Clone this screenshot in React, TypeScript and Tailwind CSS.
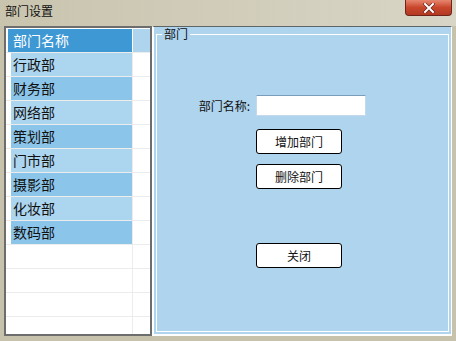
import React from 'react';

const depts = ['行政部', '财务部', '网络部', '策划部', '门市部', '摄影部', '化妆部', '数码部'];

const font = { fontFamily: '"Noto Sans CJK SC", "Noto Sans", sans-serif' };

const App = () => {
  return (
    <div className="w-[456px] h-[341px] bg-[#c6c2ab] flex flex-col overflow-hidden" style={font}>
      {/* Title bar */}
      <div className="relative h-[26px] shrink-0 bg-gradient-to-r from-[#c9c4ae] to-[#d9d5c6]">
        <span className="absolute left-[5px] top-[3px] text-[12px] leading-[16px] text-[#111]">部门设置</span>
        <button className="absolute right-[4px] top-0 w-[47px] h-[16px] rounded-b-[4px] border border-t-0 border-[#6e2418] bg-gradient-to-b from-[#e7866f] via-[#c8462c] to-[#b23a22] flex items-center justify-center">
          <svg width="12" height="10" viewBox="0 0 12 10">
            <path d="M2 1 L10 9 M10 1 L2 9" stroke="#5a2015" strokeWidth="3.2" strokeLinecap="square" />
            <path d="M2 1 L10 9 M10 1 L2 9" stroke="#ffffff" strokeWidth="2" strokeLinecap="square" />
          </svg>
        </button>
      </div>

      {/* Body */}
      <div className="flex h-[310px] pl-[4px] pr-[4px]">
        {/* Grid */}
        <div className="w-[148px] h-full border-2 border-[#6d6d6d] bg-white flex flex-col overflow-hidden">
          <div className="flex h-[24px] pt-[1px] shrink-0">
            <div className="ml-[2px] w-[124px] h-[23px] bg-[#3d98d3] text-white text-[14px] leading-[23px] pl-[5px]">部门名称</div>
            <div className="ml-[1px] w-[17px] h-[23px] bg-[#aed4ee]"></div>
          </div>
          {depts.map((d, i) => (
            <div key={d} className="flex h-[24px] shrink-0 border-t border-[#ececec]">
              <div className={`ml-[5px] w-[121px] h-[23px] text-[14px] leading-[23px] pl-[2px] text-[#111] ${i % 2 === 0 ? 'bg-[#acd5ef]' : 'bg-[#8cc5ea]'}`}>
                {d}
              </div>
              <div className="w-[1px] bg-[#ececec]"></div>
            </div>
          ))}
          {[0, 1, 2, 3].map((i) => (
            <div key={i} className="flex h-[24px] shrink-0 border-t border-[#ececec]">
              <div className="w-[126px]"></div>
              <div className="w-[1px] bg-[#ececec]"></div>
            </div>
          ))}
        </div>

        {/* Right panel */}
        <div className="w-[300px] h-full bg-[#aed4ee] border-t border-[#5f6565] border-l-2 border-l-white border-r border-r-white border-b-2 border-b-white pl-[2px] pr-[2px] pb-[1px]">
          <fieldset className="h-[306px] border border-white -mt-[1px] pb-0">
            <legend className="ml-[5px] px-[2px] text-[12px] leading-[16px] text-[#111]">部门</legend>
            <div className="flex flex-col mt-[53px]">
              <div className="flex items-center">
                <span className="w-[99px] pr-[6px] text-right text-[12px] text-[#111]">部门名称:</span>
                <input className="w-[110px] h-[21px] bg-white border border-[#c5d9ea] border-t-[#7a9cbd] outline-none px-1 text-[12px]" />
              </div>
              <button className="ml-[99px] mt-[13px] w-[86px] h-[25px] bg-white border border-black rounded-[3px] text-[12px] text-[#111]">增加部门</button>
              <button className="ml-[99px] mt-[10px] w-[86px] h-[25px] bg-white border border-black rounded-[3px] text-[12px] text-[#111]">删除部门</button>
              <button className="ml-[99px] mt-[54px] w-[86px] h-[25px] bg-white border border-black rounded-[3px] text-[12px] text-[#111]">关闭</button>
            </div>
          </fieldset>
        </div>
      </div>
    </div>
  );
};

export default App;
